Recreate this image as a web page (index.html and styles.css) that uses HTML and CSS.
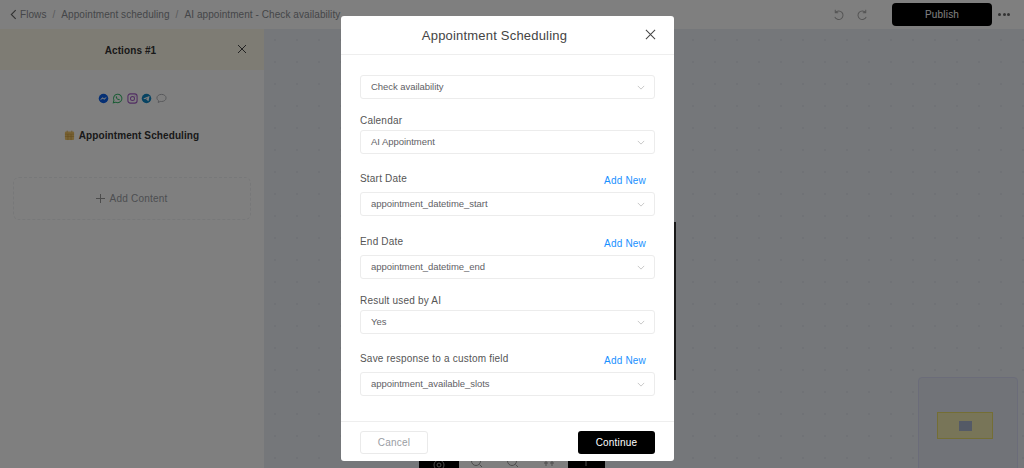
FILE: index.html
```html
<!DOCTYPE html>
<html lang="en">
<head>
<meta charset="utf-8">
<title>Appointment Scheduling</title>
<link rel="stylesheet" href="styles.css">
</head>
<body>
<div class="app">
  <header class="topbar">
    <nav class="crumbs">
      <svg class="back" viewBox="0 0 8 12"><path d="M6.5 1 1.5 6l5 5"/></svg>
      <span>Flows</span><span class="sep">/</span>
      <span>Appointment scheduling</span><span class="sep">/</span>
      <span>AI appointment - Check availability</span>
    </nav>
    <div class="tools">
      <svg class="hist" viewBox="0 0 14 14"><path d="M3.5 2v3.2h3.2M3.600 5A4.600 4.600 0 1 1 3 9.500"/></svg>
      <svg class="hist" viewBox="0 0 14 14"><path d="M10.500 2v3.200H7.300M10.400 5a4.600 4.600 0 1 0 .6 4.500"/></svg>
      <button class="publish">Publish</button>
      <span class="more"><i></i><i></i><i></i></span>
    </div>
  </header>
  <main class="work">
    <aside class="panel">
      <div class="panel-head">
        <span class="panel-title">Actions #1</span>
        <svg class="panel-close" viewBox="0 0 10 10"><path d="M1 1l8 8M9 1l-8 8"/></svg>
      </div>
      <div class="channels">
        <svg viewBox="0 0 12 12"><circle cx="6" cy="6" r="5.200" fill="#0a5fe8"/><path d="M2.800 7.200 5 5l1.500 1.200L9 4.800 7 7 5.400 5.900z" fill="#fff" stroke="#fff" stroke-width=".5"/></svg>
        <svg viewBox="0 0 12 12"><path d="M1.400 10.700 2.100 8A4.600 4.600 0 1 1 4 10z" fill="none" stroke="#35b86a" stroke-width="1.100"/><path d="M4.200 3.900c-.6 1.600 2 4.300 3.900 3.900l.4-1-1.200-.6-.5.500c-.6-.2-1.200-.9-1.500-1.500l.5-.5-.6-1.200z" fill="#35b86a"/></svg>
        <svg viewBox="0 0 12 12"><rect x="1" y="1" width="10" height="10" rx="2.600" fill="none" stroke="#a45cc6" stroke-width="1.200"/><circle cx="6" cy="6" r="2.200" fill="none" stroke="#a45cc6" stroke-width="1.100"/><circle cx="8.700" cy="3.300" r=".6" fill="#a45cc6"/></svg>
        <svg viewBox="0 0 12 12"><circle cx="6" cy="6" r="5.200" fill="#0f86c4"/><path d="M2.400 6 9.300 3.200 8.200 9 5.600 7.200 7.600 4.900 4.400 6.900z" fill="#fff"/></svg>
        <svg viewBox="0 0 12 12"><path d="M6 1.500c-2.800 0-5 1.700-5 3.900 0 1.200.7 2.300 1.800 3l-.4 2 2.200-1.200c.5.100.9.100 1.400.100 2.800 0 5-1.700 5-3.900S8.800 1.500 6 1.500z" fill="none" stroke="#a9abb0" stroke-width="1"/></svg>
      </div>
      <div class="block-title">
        <svg class="cal" viewBox="0 0 12 12"><rect x="1" y="1.500" width="10" height="9.500" rx="1.200" fill="#f2c66a"/><path d="M1 4.500h10M1 7h10M4.300 4.500V11M7.700 4.500V11M3.500 .6v2M8.500 .6v2" stroke="#c99a3f" stroke-width=".7"/></svg>
        <span>Appointment Scheduling</span>
      </div>
      <div class="add-content"><span class="plus"></span><span>Add Content</span></div>
    </aside>
    <section class="canvas">
      <div class="scroll-line"></div>
      <div class="flow-tools">
        <span class="ft dark"><svg viewBox="0 0 14 14"><circle cx="7" cy="7" r="5"/><circle cx="7" cy="7" r="2"/></svg></span>
        <span class="ft"><svg viewBox="0 0 14 14"><circle cx="6" cy="3" r="4.500"/><path d="M9.500 6.500 12 9"/></svg></span>
        <span class="ft"><svg viewBox="0 0 14 14"><circle cx="6" cy="3" r="4.500"/><path d="M9.500 6.500 12 9"/></svg></span>
        <span class="ft"><svg viewBox="0 0 14 14"><path d="M3 2v6M1 5h4M9 2v6M7 5h4"/></svg></span>
        <span class="ft dark narrow"><svg viewBox="0 0 14 14"><path d="M7 1v7"/></svg></span>
      </div>
      <div class="minimap"><div class="mini-node"><i></i></div></div>
    </section>
  </main>
</div>

<div class="overlay">
  <div class="modal">
    <div class="modal-head">
      <h2>Appointment Scheduling</h2>
      <svg class="modal-close" viewBox="0 0 12 12"><path d="M1 1l10 10M11 1 1 11"/></svg>
    </div>
    <div class="modal-body">
      <div class="select first"><span>Check availability</span><svg viewBox="0 0 10 6"><path d="M1 1l4 4 4-4"/></svg></div>

      <div class="row"><label>Calendar</label></div>
      <div class="select"><span>AI Appointment</span><svg viewBox="0 0 10 6"><path d="M1 1l4 4 4-4"/></svg></div>

      <div class="row tall"><label>Start Date</label><a>Add New</a></div>
      <div class="select"><span>appointment_datetime_start</span><svg viewBox="0 0 10 6"><path d="M1 1l4 4 4-4"/></svg></div>

      <div class="row tall end"><label>End Date</label><a>Add New</a></div>
      <div class="select"><span>appointment_datetime_end</span><svg viewBox="0 0 10 6"><path d="M1 1l4 4 4-4"/></svg></div>

      <div class="row"><label>Result used by AI</label></div>
      <div class="select"><span>Yes</span><svg viewBox="0 0 10 6"><path d="M1 1l4 4 4-4"/></svg></div>

      <div class="row tall"><label>Save response to a custom field</label><a>Add New</a></div>
      <div class="select"><span>appointment_available_slots</span><svg viewBox="0 0 10 6"><path d="M1 1l4 4 4-4"/></svg></div>
    </div>
    <div class="modal-foot">
      <button class="cancel">Cancel</button>
      <button class="continue">Continue</button>
    </div>
  </div>
</div>
</body>
</html>
```
FILE: styles.css
```css
* { box-sizing: border-box; }
html, body { margin: 0; height: 100%; overflow: hidden; }
body { font-family: "Liberation Sans", Arial, sans-serif; color: #333; background: #eaeef4; }

.app { height: 468px; display: flex; flex-direction: column; }

.topbar { height: 29px; background: #fff; display: flex; align-items: center; justify-content: space-between; padding: 0 9px 0 10px; }
.crumbs { display: flex; align-items: center; font-size: 10px; letter-spacing: .07px; color: #8a8d92; }
.back { width: 7px; height: 11px; margin-right: 3px; fill: none; stroke: #666; stroke-width: 1.3; }
.sep { margin: 0 6px; color: #b5b7ba; }
.tools { display: flex; align-items: center; }
.hist { width: 13px; height: 13px; margin-right: 11px; fill: none; stroke: #aaa; stroke-width: 1.1; }
.hist + .hist { margin-right: 23px; }
.publish { width: 100px; height: 23px; border: 0; border-radius: 4px; background: #000; color: #fff; font: 10px "Liberation Sans", Arial, sans-serif; letter-spacing: .2px; }
.more { width: 22px; height: 22px; margin-left: 1px; display: flex; align-items: center; justify-content: center; gap: 1.500px; }
.more i { width: 3px; height: 3px; border-radius: 50%; background: #666; }

.work { flex: 1; display: flex; min-height: 0; }
.panel { width: 264px; background: #fff; display: flex; flex-direction: column; align-items: center; }
.panel-head { width: 100%; height: 41px; padding-top: 1px; background: #fdf8e9; display: flex; align-items: center; justify-content: center; position: relative; }
.panel-title { font-size: 10px; font-weight: 700; letter-spacing: .1px; color: #333; margin-right: 3px; }
.panel-close { position: absolute; left: 237px; top: 15px; width: 10px; height: 10px; fill: none; stroke: #444; stroke-width: 1; }
.channels { margin-top: 23px; display: flex; gap: 3.500px; }
.channels svg { width: 11px; height: 11px; }
.block-title { margin-top: 26px; display: flex; align-items: center; gap: 4px; font-size: 10px; font-weight: 700; letter-spacing: .1px; color: #333; margin-left: -1px; }
.cal { width: 11px; height: 11px; }
.add-content { margin-top: 36px; width: 238px; height: 43px; margin-left: -1px; border: 1px dashed #eff0f2; border-radius: 6px; display: flex; align-items: center; justify-content: center; gap: 5px; padding-bottom: 1px; font-size: 10px; letter-spacing: .2px; color: #9a9da3; }
.plus { width: 9px; height: 9px; background: linear-gradient(#999, #999) center / 100% 1px no-repeat, linear-gradient(#999, #999) center / 1px 100% no-repeat; }

.canvas { flex: 1; position: relative; background: #eaeef4 radial-gradient(#e0e4ec 1px, transparent 1px) 0 0 / 22px 22px; }
.scroll-line { position: absolute; left: 410px; top: 193px; width: 2px; height: 158px; background: #333; }
.flow-tools { position: absolute; left: 155px; bottom: 0; width: 186px; height: 23px; display: flex; background: #fff; overflow: hidden; }
.ft { flex: 1; display: flex; justify-content: center; padding-top: 13px; }
.ft.dark { flex: 0 0 40px; background: #000; }
.ft.narrow { flex: 0 0 37px; }
.ft svg { width: 14px; height: 14px; fill: none; stroke: #999; }
.minimap { position: absolute; left: 654px; top: 348px; width: 100px; height: 100px; border: 1px solid #d6d9f2; border-radius: 4px; background: #e2e7f1; display: flex; justify-content: center; padding: 34px 6px 0 0; }
.mini-node { width: 56px; height: 27px; border: 1px solid #e8dc6a; background: #f0eab0; display: flex; align-items: center; justify-content: center; }
.mini-node i { width: 13px; height: 10px; background: #a9b4cc; }

.overlay { position: fixed; inset: 0; background: rgba(0, 0, 0, .5); display: flex; justify-content: center; padding: 16px 9px 0 0; }
.modal { width: 333px; height: 445px; background: #fff; border-radius: 3px; display: flex; flex-direction: column; }
.modal-head { height: 39px; flex: none; border-bottom: 1px solid #eee; display: flex; align-items: center; justify-content: center; position: relative; }
.modal-head h2 { margin: 0; font-size: 13px; font-weight: 400; letter-spacing: .2px; color: #444; transform: translateX(-13px); }
.modal-close { position: absolute; right: 18px; top: 13px; width: 11px; height: 11px; fill: none; stroke: #444; stroke-width: 1.1; }
.modal-body { flex: 1; padding: 20px 19px 0; }
.select { height: 24px; border: 1px solid #ececec; border-radius: 3px; display: flex; align-items: center; justify-content: space-between; padding: 0 9px 2px 10px; font-size: 9.500px; letter-spacing: -.05px; color: #5f6166; }
.select svg { width: 8px; height: 5px; fill: none; stroke: #bbb; stroke-width: 1; margin-top: 2px; }
.row { height: 31px; display: flex; align-items: flex-end; justify-content: space-between; padding: 0 9px 4px 0; font-size: 10px; letter-spacing: .2px; color: #555; }
.row.tall { height: 38px; padding-bottom: 8px; }
.row.end { height: 39px; }
.row a { color: #1890ff; font-size: 10px; transform: translateY(2px); }
.modal-foot { height: 40px; flex: none; border-top: 1px solid #eee; display: flex; align-items: flex-start; justify-content: space-between; padding: 9px 19px 0; }
.modal-foot button { height: 23px; border-radius: 3px; font: 10px "Liberation Sans", Arial, sans-serif; letter-spacing: .2px; }
.cancel { width: 68px; border: 1px solid #eaeaea; background: #fff; color: #9a9da3; }
.continue { width: 77px; border: 0; background: #000; color: #fff; }
```
